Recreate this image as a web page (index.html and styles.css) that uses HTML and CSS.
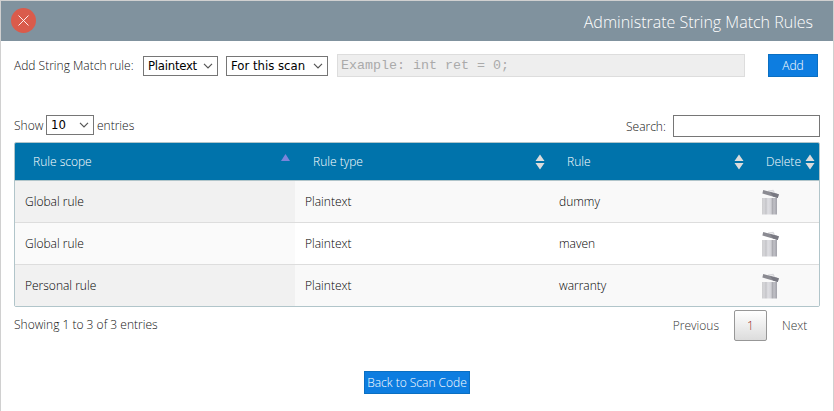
FILE: index.html
```html
<!DOCTYPE html>
<html lang="en">
<head>
<meta charset="utf-8">
<title>Administrate String Match Rules</title>
<link rel="stylesheet" href="styles.css">
</head>
<body>
<svg class="defs" width="0" height="0">
  <defs>
    <linearGradient id="can" x1="0" x2="1" y1="0" y2="0">
      <stop offset="0" stop-color="#b8b8bb"/><stop offset=".1" stop-color="#d9d9dc"/>
      <stop offset=".25" stop-color="#c4c4c8"/><stop offset=".38" stop-color="#dedee2"/>
      <stop offset=".6" stop-color="#d2d2d7"/><stop offset=".68" stop-color="#a9a9af"/>
      <stop offset=".8" stop-color="#c0c0c6"/><stop offset="1" stop-color="#a2a2aa"/>
    </linearGradient>
    <symbol id="trash" viewBox="0 0 18 26">
      <path d="M6 2.2 11 1.5 12.5 4" fill="none" stroke="#d8d8dc" stroke-width="1.4"/>
      <path d="M1.2 1 16.8 5.3 15.8 9 .4 4.4z" fill="#8b8b92"/>
      <path d="M8 2.9 16.8 5.3 15.8 9 11 7.6z" fill="#797982"/>
      <path d="M.3 9H15V25.5H.3z" fill="url(#can)"/>
    </symbol>
    <symbol id="sort" viewBox="0 0 10 16">
      <path d="M5 .5 9.5 7H.5zM5 15.5.5 9h9z" fill="#dcdcdc"/>
    </symbol>
    <symbol id="chevron" viewBox="0 0 10 6">
      <path d="m1 .8 4 4 4-4" fill="none" stroke="#555" stroke-width="1.2"/>
    </symbol>
  </defs>
</svg>
<div class="dialog">
  <header class="titlebar">
    <svg class="close" viewBox="0 0 25 25"><circle cx="12.5" cy="12.5" r="12.5" fill="#da5b4b"/><path d="m7.5 7.5 10 10m0-10-10 10" stroke="#fff" stroke-width=".9"/></svg>
    <h1 class="title">Administrate String Match Rules</h1>
  </header>
  <div class="add-row">
    <span class="add-label">Add String Match rule:</span>
    <div class="select type"><span>Plaintext</span><svg><use href="#chevron"/></svg></div>
    <div class="select scope"><span>For this scan</span><svg><use href="#chevron"/></svg></div>
    <div class="example">Example: int ret = 0;</div>
    <div class="button add">Add</div>
  </div>
  <div class="filters">
    <span class="show">Show</span>
    <div class="select count"><b>10</b><svg><use href="#chevron"/></svg></div>
    <span>entries</span>
    <span class="search-label">Search:</span>
    <div class="search"></div>
  </div>
  <div class="table">
    <div class="row head">
      <div><span>Rule scope</span><svg class="asc" viewBox="0 0 9 7"><path d="M4.5 0 9 7H0z" fill="#7b84db"/></svg></div>
      <div><span>Rule type</span><svg class="sort"><use href="#sort"/></svg></div>
      <div><span>Rule</span><svg class="sort"><use href="#sort"/></svg></div>
      <div><span>Delete</span><svg class="sort"><use href="#sort"/></svg></div>
    </div>
    <div class="row odd">
      <div>Global rule</div><div>Plaintext</div><div>dummy</div><div><svg class="trash"><use href="#trash"/></svg></div>
    </div>
    <div class="row">
      <div>Global rule</div><div>Plaintext</div><div>maven</div><div><svg class="trash"><use href="#trash"/></svg></div>
    </div>
    <div class="row odd">
      <div>Personal rule</div><div>Plaintext</div><div>warranty</div><div><svg class="trash"><use href="#trash"/></svg></div>
    </div>
  </div>
  <div class="footer">
    <span class="info">Showing 1 to 3 of 3 entries</span>
    <span class="previous">Previous</span>
    <span class="page">1</span>
    <span class="next">Next</span>
  </div>
  <div class="button back">Back to Scan Code</div>
</div>
</body>
</html>
```
FILE: styles.css
```css
* { box-sizing: border-box; }
body { margin: 0; background: #fff; font: 300 12px/18px "Open Sans", "Noto Sans", sans-serif; color: #111; }
.defs { position: absolute; }
.dialog { width: 834px; height: 411px; border: 1px solid #d0d0d0; border-bottom: 0; overflow: hidden; white-space: nowrap; }
.titlebar { height: 40px; background: #80929e; display: flex; align-items: center; justify-content: space-between; padding: 0 20px 0 10px; }
.close { width: 25px; height: 25px; margin-top: -1px; }
.title { margin: 2px 0 0; font-size: 16px; line-height: 24px; font-weight: 300; color: #fff; }
.add-row { display: flex; align-items: center; height: 23px; margin: 13px 15px 0 13px; }
.add-label { width: 129px; }
.select { height: 20px; border: 1px solid #767676; display: flex; align-items: center; justify-content: space-between; padding: 0 4px; font: 400 13px/18px "DejaVu Sans Condensed", sans-serif; color: #000; }
.select svg { width: 10px; height: 6px; }
.select b { font-weight: 400; }
.type, .scope { margin-top: 1px; }
.type { width: 75px; margin-right: 8px; letter-spacing: -.25px; }
.scope { width: 102px; margin-right: 9px; }
.example { width: 408px; height: 23px; border: 1px solid #ddd; background: #eee; padding: 0 3px; font: 400 13.33px/21px "Liberation Mono", monospace; color: #aaa; }
.button { height: 23px; border: 1px solid #0a6fc2; background: #0d7de0; color: #fff; text-align: center; line-height: 22px; }
.add { width: 50px; margin-left: 23px; }
.filters { display: flex; height: 22px; margin: 38px 13px 0 13px; }
.filters span { line-height: 22px; }
.show { width: 32px; }
.count { width: 48px; margin-right: 3px; }
.filters .search-label { margin-left: auto; width: 47px; line-height: 24px; }
.search { width: 147px; border: 1px solid #767676; }
.table { width: 806px; margin: 5px 0 0 13px; border: 1px solid #b1c5ca; border-radius: 2px; overflow: hidden; color: #000; }
.row { display: grid; grid-template-columns: 280px 254px 203px 67px; height: 42px; border-bottom: 1px solid #ddd; }
.row:last-child { border-bottom: 0; height: 41px; }
.row > div { display: flex; align-items: center; padding-left: 10px; }
.row > div:first-child { background: #fafafa; }
.row.odd { background: #f9f9f9; }
.row.odd > div:first-child { background: #f1f1f1; }
.row.head { height: 38px; background: #0073ab; border-color: #b1c5ca; color: #fff; }
.row.head > div { padding: 0 4px 0 18px; justify-content: space-between; background: none; }
.row.head > div:first-child { padding-right: 5px; }
.row.head > div:nth-child(3) { padding-right: 8px; }
.row.head > div:last-child { padding-left: 14px; }
.sort { width: 10px; height: 16px; }
.asc { width: 9px; height: 7px; margin-bottom: 9px; }
.trash { width: 18px; height: 26px; }
.footer { display: flex; height: 32px; margin: 3px 13px 0; }
.info { line-height: 30px; }
.previous, .page, .next { line-height: 31px; color: #333; }
.previous { margin-left: auto; margin-right: 15px; }
.page { width: 33px; height: 31px; border: 1px solid #979797; border-radius: 2px; background: linear-gradient(#fff, #dcdcdc); text-align: center; color: #9b2b2b; line-height: 30px; }
.next { margin-left: 15px; width: 38px; }
.back { width: 106px; margin: 29px 0 0 363px; }
```
